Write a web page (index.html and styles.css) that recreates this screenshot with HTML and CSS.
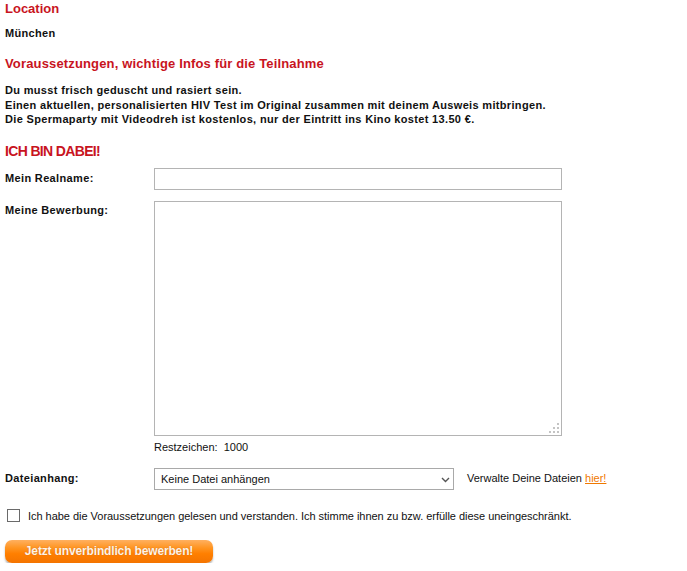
FILE: index.html
```html
<!DOCTYPE html>
<html lang="de">
<head>
<meta charset="utf-8">
<title>Bewerbung</title>
<link rel="stylesheet" href="styles.css">
</head>
<body>
<div class="page">
  <h2 class="title">Location</h2>
  <p class="city">München</p>
  <h2 class="title title-info">Voraussetzungen, wichtige Infos für die Teilnahme</h2>
  <p class="info">Du musst frisch geduscht und rasiert sein.<br>Einen aktuellen, personalisierten HIV Test im Original zusammen mit deinem Ausweis mitbringen.<br>Die Spermaparty mit Videodreh ist kostenlos, nur der Eintritt ins Kino kostet 13.50 €.</p>
  <h2 class="title title-join">ICH BIN DABEI!</h2>
  <form class="form">
    <div class="row">
      <label class="label label-input" for="realname">Mein Realname:</label>
      <input class="field" id="realname" type="text">
    </div>
    <div class="row row-text">
      <label class="label label-area" for="bewerbung">Meine Bewerbung:</label>
      <div class="area-col">
        <div class="area-wrap">
          <textarea class="area" id="bewerbung"></textarea>
          <svg class="grip" width="12" height="12" viewBox="0 0 12 12">
            <rect x="9" y="1" width="2" height="2" fill="#c4c4c4"/>
            <rect x="5" y="5" width="2" height="2" fill="#c4c4c4"/>
            <rect x="9" y="5" width="2" height="2" fill="#c4c4c4"/>
            <rect x="1" y="9" width="2" height="2" fill="#c4c4c4"/>
            <rect x="5" y="9" width="2" height="2" fill="#c4c4c4"/>
            <rect x="9" y="9" width="2" height="2" fill="#c4c4c4"/>
          </svg>
        </div>
        <div class="rest">Restzeichen:&nbsp; 1000</div>
      </div>
    </div>
    <div class="row row-file">
      <label class="label label-input" for="datei">Dateianhang:</label>
      <div class="select-wrap">
        <select class="select" id="datei">
          <option>Keine Datei anhängen</option>
        </select>
        <svg class="chev" width="9" height="6" viewBox="0 0 9 6">
          <path d="M1 1 L4.5 4.5 L8 1" fill="none" stroke="#555" stroke-width="1.4"/>
        </svg>
      </div>
      <span class="manage">Verwalte Deine Dateien <a href="#" class="link">hier!</a></span>
    </div>
    <div class="row row-check">
      <input class="check" type="checkbox" id="agree">
      <label class="check-label" for="agree">Ich habe die Voraussetzungen gelesen und verstanden. Ich stimme ihnen zu bzw. erfülle diese uneingeschränkt.</label>
    </div>
    <button class="submit" type="button">Jetzt unverbindlich bewerben!</button>
  </form>
</div>
</body>
</html>
```
FILE: styles.css
```css
html, body {
  margin: 0;
  padding: 0;
  background: #fff;
}
body {
  font-family: "Liberation Sans", Arial, sans-serif;
  font-size: 11px;
  color: #111;
}
.page {
  padding: 0 5px;
}
.title {
  margin: 0;
  padding-top: 1px;
  font-size: 13px;
  line-height: 16px;
  font-weight: bold;
  color: #c8141e;
}
.city {
  margin: 9px 0 0;
  font-weight: bold;
  line-height: 14px;
  letter-spacing: 0.33px;
}
.title-info {
  margin-top: 15px;
  letter-spacing: 0.15px;
}
.info {
  margin: 11px 0 0;
  font-weight: bold;
  line-height: 14.5px;
  letter-spacing: 0.33px;
}
.title-join {
  margin-top: 15px;
  font-size: 14px;
  letter-spacing: -0.65px;
}
.form {
  margin: 9px 0 0;
  display: flex;
  flex-direction: column;
}
.row {
  display: flex;
  align-items: flex-start;
}
.label {
  width: 149px;
  flex: none;
  font-weight: bold;
  line-height: 14px;
  letter-spacing: 0.35px;
}
.label-input {
  padding-top: 3px;
}
.label-area {
  padding-top: 2px;
}
.field {
  box-sizing: border-box;
  width: 408px;
  height: 22px;
  margin: 0;
  border: 1px solid #b4b4b4;
  padding: 2px 6px;
  font: 11px "Liberation Sans", Arial, sans-serif;
  outline: none;
}
.row-text {
  margin-top: 11px;
}
.area-col {
  display: flex;
  flex-direction: column;
}
.area-wrap {
  position: relative;
  width: 408px;
  height: 235px;
}
.area {
  box-sizing: border-box;
  display: block;
  width: 408px;
  height: 235px;
  margin: 0;
  border: 1px solid #b4b4b4;
  resize: none;
  outline: none;
  font: 11px "Liberation Sans", Arial, sans-serif;
}
.grip {
  position: absolute;
  right: 2px;
  bottom: 2px;
}
.rest {
  margin-top: 4px;
  line-height: 14px;
}
.row-file {
  margin-top: 14px;
}
.select-wrap {
  position: relative;
  width: 300px;
  height: 22px;
}
.select {
  box-sizing: border-box;
  -webkit-appearance: none;
  appearance: none;
  width: 300px;
  height: 22px;
  margin: 0;
  border: 1px solid #a9a9a9;
  border-radius: 0;
  background: #fff;
  padding: 0 6px;
  font: 11px "Liberation Sans", Arial, sans-serif;
  color: #111;
  outline: none;
}
.chev {
  position: absolute;
  right: 4px;
  top: 9px;
  pointer-events: none;
}
.manage {
  margin-left: 13px;
  padding-top: 3px;
  line-height: 14px;
}
.link {
  color: #f07800;
  text-decoration: underline;
}
.row-check {
  margin-top: 19px;
  align-items: center;
}
.check {
  -webkit-appearance: none;
  appearance: none;
  box-sizing: border-box;
  width: 13px;
  height: 13px;
  margin: 0 0 0 2px;
  border: 1px solid #6a6a6a;
  background: #fff;
  border-radius: 0;
}
.check-label {
  margin-left: 8px;
  line-height: 14px;
  letter-spacing: -0.03px;
}
.submit {
  align-self: flex-start;
  margin-top: 17px;
  box-sizing: border-box;
  width: 208px;
  height: 23px;
  padding: 0;
  border: 0;
  border-radius: 7px;
  background: linear-gradient(to bottom, #ffb060 0%, #ff9420 35%, #ff7f00 60%, #f47400 100%);
  box-shadow: 0 2px 2px rgba(90, 90, 90, 0.45);
  color: #fff3e6;
  font: bold 12px "Liberation Sans", Arial, sans-serif;
  letter-spacing: -0.15px;
  text-shadow: 0 0 1px rgba(160, 70, 0, 0.6);
}
```
